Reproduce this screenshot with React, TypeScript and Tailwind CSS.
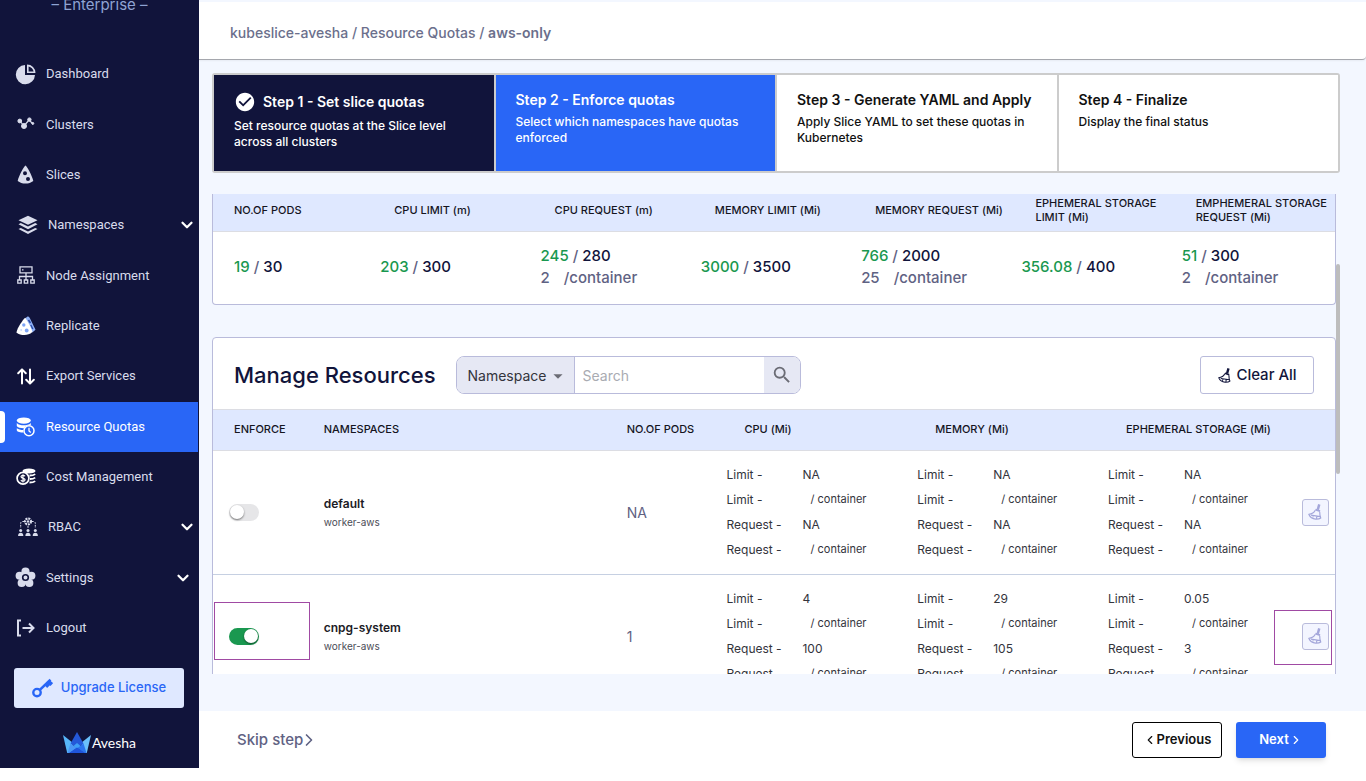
import type { ReactNode } from 'react'
import { MdArrowDropDown, MdCheckCircle, MdSearch } from 'react-icons/md'
import { ChevronDown, ChevronLeft, ChevronRight } from 'lucide-react'

const PieIcon = () => (
  <svg width="21" height="21" viewBox="0 0 21 21" fill="currentColor">
    <path d="M10 1a9.6 9.6 0 1 0 10 10H10z" />
    <path fillRule="evenodd" d="M12 0.5a8.5 8.5 0 0 1 8.5 8.5H12zM13.6 2.4v5h5a6.5 6.5 0 0 0-5-5z" />
  </svg>
)

const ClustersIcon = () => (
  <svg width="18" height="14" viewBox="0 0 18 14" fill="currentColor" stroke="currentColor">
    <path d="M3 4l4 5 5-6 4 4" fill="none" strokeWidth="1.2" />
    <circle cx="2.8" cy="4" r="1.9" />
    <circle cx="7" cy="9" r="2.5" />
    <circle cx="12.4" cy="2.6" r="1.7" />
    <circle cx="15.8" cy="6.4" r="1" />
  </svg>
)

const SliceIcon = () => (
  <svg width="17" height="19" viewBox="0 0 17 19" fill="currentColor">
    <path
      fillRule="evenodd"
      d="M8.5.5c1 0 6.800 10.500 7.800 15.400-2.200 1.700-4.700 2.600-7.800 2.600S2.900 17.600.7 15.900C1.700 11 7.500.5 8.500.5zM8 6.200a2 2 0 1 0 0 4 2 2 0 0 0 0-4zm3 5.700a2 2 0 1 0 0 4 2 2 0 0 0 0-4z"
    />
  </svg>
)

const LayersIcon = () => (
  <svg width="20" height="20" viewBox="0 0 20 20" fill="currentColor">
    <path d="M10 .8l9.500 4.400L10 9.700.5 5.200z" />
    <path d="M.5 9.200l2.300-1.100L10 11.600l7.200-3.500 2.300 1.100L10 14.200z" />
    <path d="M.5 14l2.300-1.100L10 16.400l7.200-3.500 2.300 1.100L10 19z" />
  </svg>
)

const NodesIcon = () => (
  <svg width="18" height="18" viewBox="0 0 18 18" fill="none" stroke="currentColor" strokeWidth="1.300">
    <path d="M3 .8h12v6H3zM9 7v7M2.500 14v-3.500h13V14" />
    <path d="M5 3.800h1.500" />
    <path d="M.8 14h3.400v3.200H.8zM7.300 14h3.400v3.200H7.300zM13.800 14h3.400v3.200h-3.400z" />
  </svg>
)

const ReplicateIcon = () => (
  <svg width="20" height="20" viewBox="0 0 20 20">
    <path d="M11.500.6c1.200 0 1.900.6 2.400 1.700l5.600 11.500-3.200 2.600L9 2.600z" fill="#8fb0f5" />
    <path d="M12.500 4l2 3M14.800 9l2 4" stroke="#2c4da8" strokeWidth="1.400" />
    <path d="M9.200 1.800c1.600 2.400 6.200 9.600 7.200 14.200-2.500 2.200-5 3-8 3-3.200 0-5.600-.7-8-2.600C1.600 11.500 6.500 4.200 9.200 1.800z" fill="#fff" />
    <circle cx="7.800" cy="9" r="1.700" fill="#7fa5f5" />
    <circle cx="10.700" cy="14.500" r="1.900" fill="#7fa5f5" />
    <circle cx="5.200" cy="14" r="1" fill="#cbdafa" />
  </svg>
)

const ExportIcon = () => (
  <svg width="18" height="17" viewBox="0 0 18 17" fill="none" stroke="#fff" strokeWidth="2" strokeLinecap="round" strokeLinejoin="round">
    <path d="M5 15.500V1.500M1.200 5.200L5 1.400l3.800 3.800M13 1.500v14M9.200 11.800l3.800 3.800 3.800-3.800" />
  </svg>
)

const QuotaIcon = () => (
  <svg width="19" height="20" viewBox="0 0 19 20">
    <g fill="#fff">
      <ellipse cx="7.800" cy="3.600" rx="7" ry="3.200" />
      <path d="M.8 6c1.700 1.900 4.200 2.300 7 2.300s5.300-.4 7-2.300v2.500c-2.600-.6-5.400.6-6.600 2.700C5 11.300 1.500 10.500.8 9z" />
      <path d="M.8 11.300c1.600 1.200 3.800 1.800 6.600 1.800-.2.900-.2 1.700.1 2.500-3.200 0-6.200-.5-6.700-2z" />
    </g>
    <circle cx="13" cy="13.800" r="5" fill="none" stroke="#fff" strokeWidth="1.500" />
    <path d="M13 10.800v3.200l1.800 1.600" fill="none" stroke="#fff" strokeWidth="1.300" />
  </svg>
)

const CostIcon = () => (
  <svg width="20" height="18" viewBox="0 0 20 18">
    <ellipse cx="13" cy="3" rx="6.500" ry="2.500" fill="#fff" />
    <path d="M13.500 7.500c2.500 0 4.500-.5 5.700-1.400M14 11c2.200 0 4-.5 5.200-1.400M13.500 14.500c2.500 0 4.500-.5 5.700-1.400" fill="none" stroke="#fff" strokeWidth="1.800" />
    <circle cx="7" cy="10.300" r="5.900" fill="#11143b" stroke="#fff" strokeWidth="1.700" />
    <path d="M9 8.300c-.5-.8-1.200-1-2-1-1.100 0-2 .5-2 1.500 0 2 4.100 1 4.100 3 0 1-1 1.500-2.100 1.500-.9 0-1.700-.4-2.100-1.200M7 6.200v8.200" fill="none" stroke="#fff" strokeWidth="1.200" />
  </svg>
)

const RbacIcon = () => (
  <svg width="20" height="20" viewBox="0 0 20 20" fill="currentColor">
    <circle cx="10" cy="4.500" r="3" fill="none" stroke="currentColor" strokeWidth="2.200" strokeDasharray="2 .8" />
    <circle cx="10" cy="4.500" r="1.200" />
    <path d="M6 4.500H4.500A1.800 1.800 0 0 0 2.700 6.300V11M14 4.500h1.500a1.800 1.800 0 0 1 1.800 1.800V11M10 9v2.500" fill="none" stroke="currentColor" strokeWidth="1" strokeDasharray="1.800 1" />
    {[2.700, 10, 17.300].map((x) => (
      <g key={x}>
        <circle cx={x} cy="13.600" r="1.500" />
        <path d={`M${x - 2.600} 19c0-2 1-3.200 2.600-3.200s2.600 1.200 2.600 3.200z`} />
      </g>
    ))}
  </svg>
)

const FlowerIcon = () => (
  <svg width="21" height="21" viewBox="0 0 21 21" fill="currentColor">
    <circle cx="10.500" cy="4.700" r="4.100" />
    <circle cx="16.400" cy="8.700" r="4" />
    <circle cx="14.300" cy="16" r="4.100" />
    <circle cx="6.700" cy="16" r="4.100" />
    <circle cx="4.600" cy="8.700" r="4" />
    <circle cx="10.500" cy="10.800" r="6" />
    <circle cx="10.500" cy="10.500" r="2.800" fill="none" stroke="#11143b" strokeWidth="1.600" />
  </svg>
)

const LogoutIcon = () => (
  <svg width="19" height="18" viewBox="0 0 19 18" fill="none" stroke="currentColor" strokeWidth="2">
    <path d="M5 1.500H2v15h3M6.500 9h11M13 4.500L17.500 9 13 13.500" />
  </svg>
)

const KeyIcon = () => (
  <svg width="21" height="20" viewBox="0 0 21 20" fill="none" stroke="#2966f6">
    <circle cx="5" cy="14.600" r="3.700" strokeWidth="2.400" />
    <path d="M7.800 11.900L18.500 1.800" strokeWidth="2.600" />
    <path d="M14 6l2.500 2.600M16.500 3.600l3.300 3" strokeWidth="3.800" />
  </svg>
)

const CrownLogo = () => (
  <svg width="28" height="21" viewBox="0 0 28 21">
    <path d="M0 3l10 8-5 10h-.8z" fill="#57b6fa" />
    <path d="M28 3l-10 8 5 10h.8z" fill="#6ac0fb" />
    <path d="M14 0l6.500 11.500L14 16l-6.500-4.500z" fill="#2459d8" />
    <path d="M7.500 11.500L14 16l-7 5H4.500z" fill="#4a97f6" />
    <path d="M20.500 11.500L14 16l7 5h2.500z" fill="#2b74ee" />
    <path d="M14 11l3.500 3-3.500 2.500-3.500-2.500z" fill="#3fa0f7" />
    <path d="M14 15.500L22 21H6z" fill="#1f55dc" />
  </svg>
)

const BroomIcon = ({ size }: { size: number }) => (
  <svg width={size} height={size} viewBox="0 0 18 18" fill="none" stroke="currentColor" strokeWidth="1.300" strokeLinejoin="round">
    <path d="M13.800.5l-1.700 6" strokeWidth="2.800" />
    <path d="M9.500 6.300l5.200 1.800" strokeWidth="2" />
    <path d="M9.300 7C8 9.800 5.200 11.300 2 11.600c1.200 2.900 4.300 5.200 7.800 5.400 2.400.1 4.400-.3 5.700-1.300-1.100-2-1.200-4.800-1.200-7" />
    <path d="M4.500 12.500l10.500 1.700M7.500 13.200l-1.200 2M11 14l-.3 2.800" />
  </svg>
)

type NavItem = {
  label: string
  icon: ReactNode
  inset?: boolean
  expandable?: boolean
  active?: boolean
}

const navItems: NavItem[] = [
  { label: 'Dashboard', icon: <PieIcon /> },
  { label: 'Clusters', icon: <ClustersIcon /> },
  { label: 'Slices', icon: <SliceIcon /> },
  { label: 'Namespaces', icon: <LayersIcon />, inset: true, expandable: true },
  { label: 'Node Assignment', icon: <NodesIcon /> },
  { label: 'Replicate', icon: <ReplicateIcon /> },
  { label: 'Export Services', icon: <ExportIcon /> },
  { label: 'Resource Quotas', icon: <QuotaIcon />, active: true },
  { label: 'Cost Management', icon: <CostIcon /> },
  { label: 'RBAC', icon: <RbacIcon />, inset: true, expandable: true },
  { label: 'Settings', icon: <FlowerIcon />, expandable: true },
  { label: 'Logout', icon: <LogoutIcon /> },
]

const steps = [
  { title: 'Step 1 - Set slice quotas', text: 'Set resource quotas at the Slice level across all clusters', tone: 'bg-[#11143b] text-white', done: true },
  { title: 'Step 2 - Enforce quotas', text: 'Select which namespaces have quotas enforced', tone: 'bg-[#2966f6] text-white' },
  { title: 'Step 3 - Generate YAML and Apply', text: 'Apply Slice YAML to set these quotas in Kubernetes', tone: 'bg-white text-[#111]' },
  { title: 'Step 4 - Finalize', text: 'Display the final status', tone: 'bg-white text-[#111]' },
]

const totals = [
  { label: 'NO.OF PODS', used: '19', total: '30' },
  { label: 'CPU LIMIT (m)', used: '203', total: '300' },
  { label: 'CPU REQUEST (m)', used: '245', total: '280', container: '2' },
  { label: 'MEMORY LIMIT (Mi)', used: '3000', total: '3500' },
  { label: 'MEMORY REQUEST (Mi)', used: '766', total: '2000', container: '25' },
  { label: 'EPHEMERAL STORAGE LIMIT (Mi)', used: '356.08', total: '400' },
  { label: 'EMPHEMERAL STORAGE REQUEST (Mi)', used: '51', total: '300', container: '2' },
]

const namespaces = [
  { name: 'default', cluster: 'worker-aws', enforced: false, pods: 'NA', quotas: [['NA', 'NA'], ['NA', 'NA'], ['NA', 'NA']] },
  { name: 'cnpg-system', cluster: 'worker-aws', enforced: true, pods: '1', quotas: [['4', '100'], ['29', '105'], ['0.05', '3']], marked: true },
]

function Sidebar() {
  return (
    <aside className="flex w-[199px] shrink-0 flex-col bg-[#11143b] text-[#d9dcec]">
      <p className="h-[49px] text-center text-[15px] leading-[10px] text-[#8fa3d3]">– Enterprise –</p>
      <nav className="flex flex-1 flex-col justify-between font-['Roboto',sans-serif]">
        {navItems.map((item) => (
          <a
            key={item.label}
            href="#"
            className={`relative mr-px flex h-[50px] items-center text-[13px] ${item.inset ? 'pl-4 pr-[2px]' : 'pl-[14px] pr-[6px]'} ${item.active ? 'bg-[#2966f6] text-white' : ''}`}
          >
            {item.active && <span className="absolute left-0 top-[9px] h-8 w-[5px] rounded-r-[4px] bg-white" />}
            <span className="flex w-[23px] justify-center">{item.icon}</span>
            <span className="ml-[9px] flex-1">{item.label}</span>
            {item.expandable && <ChevronDown size={18} strokeWidth={3} className="text-white" />}
          </a>
        ))}
      </nav>
      <button className="mr-[15px] ml-[14px] mt-[15px] flex h-10 items-center justify-center gap-2 rounded-[3px] bg-[#dfe8ff] text-[13px] font-medium text-[#2966f6]">
        <KeyIcon />
        Upgrade License
      </button>
      <div className="flex h-[60px] items-center justify-center gap-px pt-2 font-['Lato',sans-serif] text-[14px] text-white">
        <CrownLogo />
        <span>Avesha</span>
      </div>
    </aside>
  )
}

function Stepper() {
  return (
    <ol className="mr-[26px] ml-[13px] grid h-[100px] grid-cols-4 gap-[2px] rounded-[3px] border-2 border-[#ccc] bg-[#ccc]">
      {steps.map((step) => (
        <li key={step.title} className={`px-5 pt-[15px] ${step.tone}`}>
          <h3 className={`flex items-center gap-[7px] text-[14px] leading-5 font-semibold ${step.done ? 'min-h-6' : ''}`}>
            {step.done && <MdCheckCircle size={22} />}
            {step.title}
          </h3>
          <p className="mt-1 text-[12px] leading-4 font-medium">{step.text}</p>
        </li>
      ))}
    </ol>
  )
}

function TotalsTable() {
  return (
    <div className="rounded-b-[4px] border border-t-0 border-[#b9bbdb] bg-white">
      <table className="w-full table-fixed text-left">
        <thead>
          <tr className="border-b border-[#dcdde3] bg-[#dfe8ff] text-[11px] leading-[14px] text-[#15151f]">
            {totals.map((t) => (
              <th key={t.label} className="pr-1 pl-[21px] pt-[2px] pb-[7px] align-middle font-medium">{t.label}</th>
            ))}
          </tr>
        </thead>
        <tbody>
          <tr className="h-[72px] text-[15px] leading-[22px] font-medium text-[#5f6283]">
            {totals.map((t) => (
              <td key={t.label} className="pb-[2px] pl-[7px] first:pl-[21px]">
                <div>
                  <span className="text-[#1a9850]">{t.used}</span> / <span className="text-[#11143b]">{t.total}</span>
                </div>
                {t.container && (
                  <div className="flex gap-[14px]">
                    <span>{t.container}</span>
                    <span>/container</span>
                  </div>
                )}
              </td>
            ))}
          </tr>
        </tbody>
      </table>
    </div>
  )
}

function QuotaLines({ limit, request }: { limit: string; request: string }) {
  return (
    <dl className="grid grid-cols-[76px_1fr] text-[12px] leading-[25px] text-[#33343c]">
      <dt>Limit -</dt>
      <dd>{limit}</dd>
      <dt>Limit -</dt>
      <dd className="pl-2 text-[11px] leading-[25px]">/ container</dd>
      <dt>Request -</dt>
      <dd>{request}</dd>
      <dt>Request -</dt>
      <dd className="pl-2 text-[11px] leading-[25px]">/ container</dd>
    </dl>
  )
}

function ManageResources() {
  return (
    <section className="mt-8 rounded-t-[4px] border border-[#b9bbdb] bg-white">
      <div className="flex h-[71px] items-center px-[21px] pt-1">
        <h2 className="text-[22px] font-medium text-[#11143b]">Manage Resources</h2>
        <div className="ml-5 flex h-[38px] w-[345px] overflow-hidden rounded-[8px] border border-[#b9bbdb]">
          <div className="relative w-[118px] shrink-0 border-r border-[#b9bbdb] bg-[#e6e8f4]">
            <select aria-label="Search by" className="h-full w-full appearance-none pl-[11px] text-[14px] text-[#33343c]">
              <option>Namespace</option>
            </select>
            <MdArrowDropDown size={22} className="pointer-events-none absolute top-[8px] right-[5px] text-[#6b6c75]" />
          </div>
          <input aria-label="Search" placeholder="Search" className="min-w-0 flex-1 px-2 text-[14px] placeholder:text-[#a9abb2]" />
          <button aria-label="Run search" className="flex w-9 items-center justify-center bg-[#e6e8f4] text-[#6b6c75]">
            <MdSearch size={22} />
          </button>
        </div>
        <button className="ml-auto flex h-[38px] w-[114px] items-center justify-center gap-1 rounded-[3px] border border-[#b9bbdb] text-[15px] font-medium text-[#11143b]">
          <BroomIcon size={15} />
          Clear All
        </button>
      </div>
      <table className="w-full table-fixed text-left">
        <colgroup>
          <col className="w-[8%]" />
          <col className="w-[27%]" />
          <col className="w-[10.5%]" />
          <col className="w-[17%]" />
          <col className="w-[17%]" />
          <col className="w-[17%]" />
          <col className="w-[3.5%]" />
        </colgroup>
        <thead>
          <tr className="h-[41px] border-y border-[#dcdde3] bg-[#dfe8ff] text-[11px] text-[#15151f]">
            {['ENFORCE', 'NAMESPACES', 'NO.OF PODS', 'CPU (Mi)', 'MEMORY (Mi)', 'EPHEMERAL STORAGE (Mi)', ''].map((h) => (
              <th key={h} className="pl-[21px] font-medium">{h}</th>
            ))}
          </tr>
        </thead>
        <tbody>
          {namespaces.map((ns) => (
            <tr key={ns.name} className="border-b border-[#c6d0e2]">
              <td className="pl-4">
                <div className="relative h-[17px] w-[30px]">
                  <input
                    type="checkbox"
                    role="switch"
                    aria-label={`Enforce ${ns.name}`}
                    defaultChecked={ns.enforced}
                    className="block h-[17px] w-[30px] appearance-none rounded-full bg-[#e6e6e8] before:m-px before:block before:h-[14px] before:w-[14px] before:rounded-full before:bg-white before:shadow-[0_1px_2px_rgba(0,0,0,0.5)] checked:bg-[#1a9850] checked:before:ml-[15px]"
                  />
                  {ns.marked && <span className="pointer-events-none absolute -top-[26px] -left-[15px] h-[58px] w-24 border border-[#a04aa3]" />}
                </div>
              </td>
              <td className="pt-[2px] pl-[21px]">
                <p className="text-[12px] leading-[18px] font-semibold text-[#1c1c26]">{ns.name}</p>
                <p className="text-[10px] leading-[18px] text-[#4b4c57]">{ns.cluster}</p>
              </td>
              <td className="pl-[21px] text-[14px] text-[#5f6283]">{ns.pods}</td>
              {ns.quotas.map(([limit, request], i) => (
                <td key={i} className="pt-[11px] pb-3 pl-[3px]">
                  <QuotaLines limit={limit} request={request} />
                </td>
              ))}
              <td className="pl-[6px]">
                <div className="relative w-[27px]">
                  <button aria-label={`Clear ${ns.name}`} className="flex h-[27px] w-[27px] items-center justify-center rounded-[3px] border border-[#b9bbdb] bg-[#f3f5ff] text-[#a3a6da]">
                    <BroomIcon size={16} />
                  </button>
                  {ns.marked && <span className="pointer-events-none absolute -top-[13px] -left-7 h-[55px] w-[58px] border border-[#a04aa3]" />}
                </div>
              </td>
            </tr>
          ))}
        </tbody>
      </table>
    </section>
  )
}

export default function App() {
  return (
    <div className="flex h-screen bg-white pb-[13px] font-['Inter','Liberation_Sans',sans-serif]">
      <Sidebar />
      <div className="flex min-w-0 flex-1 flex-col bg-[#f3f7ff]">
        <header className="mt-[2px] flex h-[58px] shrink-0 items-center rounded-br-[4px] border-b border-[#a5a7ad] bg-white pt-1 pl-[31px] text-[14px] font-medium text-[#6b6f8c] shadow-xs">
          <p>
            kubeslice-avesha / Resource Quotas / <span className="font-semibold">aws-only</span>
          </p>
        </header>
        <div className="mt-[13px] shrink-0">
          <Stepper />
        </div>
        <div className="relative mt-[21px] mr-[26px] mb-[37px] ml-[13px] min-h-0 flex-1">
          <main className="h-full overflow-hidden pr-1">
            <TotalsTable />
            <ManageResources />
          </main>
          <span className="absolute top-[70px] right-0 h-[210px] w-1 rounded-full bg-[#bdbdbd]" />
        </div>
        <footer className="flex h-[57px] shrink-0 items-center bg-white pt-px pr-10 pl-[38px]">
          <button className="flex items-center text-[15px] font-medium text-[#5f6283]">
            Skip step
            <ChevronRight size={20} className="-ml-1" />
          </button>
          <button className="ml-auto flex h-9 w-[90px] items-center justify-center rounded-[3px] border border-black text-[13px] font-semibold text-[#111]">
            <ChevronLeft size={14} />
            Previous
          </button>
          <button className="ml-[14px] flex h-9 w-[90px] items-center justify-center rounded-[3px] bg-[#2966f6] text-[13px] font-semibold text-white shadow-md">
            Next
            <ChevronRight size={14} />
          </button>
        </footer>
      </div>
    </div>
  )
}
